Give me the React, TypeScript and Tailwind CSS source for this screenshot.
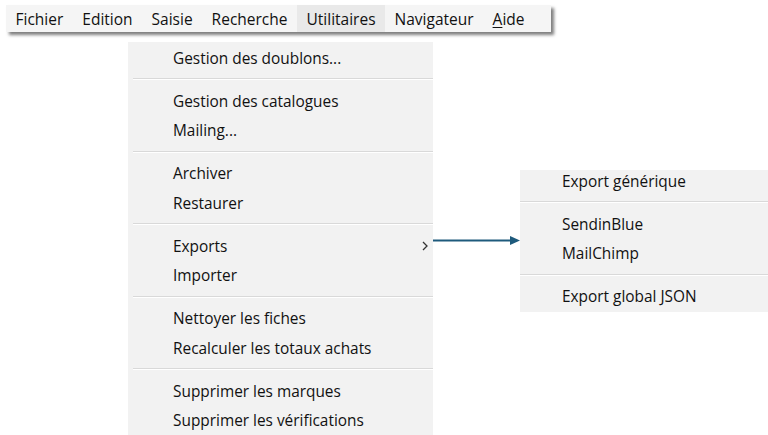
import React from 'react';

type Entry = { label: string; sub?: boolean } | 'sep';

const mainItems: Entry[] = [
  { label: 'Gestion des doublons...' },
  'sep',
  { label: 'Gestion des catalogues' },
  { label: 'Mailing...' },
  'sep',
  { label: 'Archiver' },
  { label: 'Restaurer' },
  'sep',
  { label: 'Exports', sub: true },
  { label: 'Importer' },
  'sep',
  { label: 'Nettoyer les fiches' },
  { label: 'Recalculer les totaux achats' },
  'sep',
  { label: 'Supprimer les marques' },
  { label: 'Supprimer les vérifications' },
];

const subItems: Entry[] = [
  { label: 'Export générique' },
  'sep',
  { label: 'SendinBlue' },
  { label: 'MailChimp' },
  'sep',
  { label: 'Export global JSON' },
];

const barItems = ['Fichier', 'Edition', 'Saisie', 'Recherche', 'Utilitaires', 'Navigateur'];

const Chevron = () => (
  <svg width="6" height="10" viewBox="0 0 6 10" className="absolute right-[5px] top-1/2 -translate-y-1/2">
    <polyline points="1,1 5,5 1,9" fill="none" stroke="#333" strokeWidth="1.3" />
  </svg>
);

const MenuList: React.FC<{ items: Entry[]; textPad: string; sepPad: string }> = ({ items, textPad, sepPad }) => (
  <div className="flex flex-col">
    {items.map((it, i) =>
      it === 'sep' ? (
        <div key={i} className={`h-[13.5px] flex items-center ${sepPad}`}>
          <div className="w-full h-[2px] border-t border-[#d9d9d9] border-b border-b-white" />
        </div>
      ) : (
        <div key={i} className={`relative h-[29.5px] flex items-center pt-[1px] ${textPad} text-[15.4px] text-[#111]`}>
          {it.label}
          {it.sub && <Chevron />}
        </div>
      )
    )}
  </div>
);

export default function App() {
  return (
    <div
      className="relative w-[768px] h-[435px] bg-white overflow-hidden"
      style={{ fontFamily: '"Open Sans", "Noto Sans", sans-serif' }}
    >
      {/* menu bar */}
      <div className="ml-[6px] mt-[5px] w-[545px] h-[27px] bg-[#f5f5f5] flex items-center shadow-[3px_3px_3px_rgba(0,0,0,0.5)] text-[15.5px] text-[#111]">
        {barItems.map((b) => (
          <div
            key={b}
            className={`h-full flex items-center pt-[2px] px-[9.5px] ${b === 'Utilitaires' ? 'bg-[#e9e9e9]' : ''}`}
          >
            {b}
          </div>
        ))}
        <div className="h-full flex items-center pt-[2px] px-[9.5px]">
          <span className="underline underline-offset-2">A</span>ide
        </div>
      </div>

      {/* Utilitaires dropdown */}
      <div className="absolute left-[128px] top-[42px] w-[305px] h-[400px] bg-[#f2f2f2] pt-[1px]">
        <MenuList items={mainItems} textPad="pl-[45px]" sepPad="pl-[5px]" />
      </div>

      {/* arrow */}
      <svg className="absolute left-[433px] top-[234px]" width="88" height="14" viewBox="0 0 88 14">
        <line x1="0" y1="6.5" x2="78" y2="6.5" stroke="#1e5a7c" strokeWidth="2" />
        <polygon points="77,2 87,6.5 77,11" fill="#1e5a7c" />
      </svg>

      {/* Exports submenu */}
      <div className="absolute left-[520px] top-[170px] w-[248px] h-[142px] bg-[#f2f2f2] overflow-hidden">
        <div className="-mt-[4px]">
          <MenuList items={subItems} textPad="pl-[42px]" sepPad="pl-0" />
        </div>
      </div>
    </div>
  );
}
